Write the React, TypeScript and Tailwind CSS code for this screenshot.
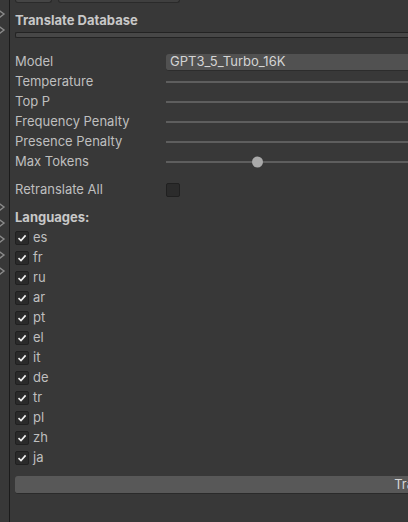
import React from 'react'

const langs = ['es', 'fr', 'ru', 'ar', 'pt', 'el', 'it', 'de', 'tr', 'pl', 'zh', 'ja']

const Chevron = () => (
  <svg width="9" height="12" viewBox="0 0 9 12" className="block">
    <path d="M-2 1.5 L4 6 L-2 10.5" fill="none" stroke="#8a8a8a" strokeWidth="1.4" />
  </svg>
)

const Slider = ({ knob }: { knob?: number }) => (
  <div className="relative flex h-full flex-1 items-center">
    <div className="h-[2px] w-full bg-[#5e5e5e]" />
    {knob !== undefined && (
      <div
        className="absolute top-1/2 h-[11px] w-[11px] -translate-y-1/2 rounded-full bg-[#a9a9a9]"
        style={{ left: knob }}
      />
    )}
  </div>
)

const Row = ({ label, children }: { label: string; children?: React.ReactNode }) => (
  <div className="flex h-[20px] items-center">
    <div className="w-[151px] shrink-0">{label}</div>
    {children}
  </div>
)

const Check = () => (
  <div className="flex h-[14px] w-[14px] items-center justify-center rounded-[2px] border border-[#202020] bg-[#2a2a2a]">
    <svg width="10" height="10" viewBox="0 0 10 10">
      <path d="M1.5 5.2 L4 7.6 L8.6 2.4" fill="none" stroke="#f0f0f0" strokeWidth="1.6" />
    </svg>
  </div>
)

export default function App() {
  return (
    <div
      className="flex h-[522px] w-[408px] overflow-hidden bg-[#383838] text-[13px] text-[#bfbfbf]"
      style={{ fontFamily: 'Inter, "Noto Sans", sans-serif' }}
    >
      <div className="flex w-[9px] shrink-0 flex-col">
        <div className="mt-[8px] flex flex-col gap-[4px]">
          <Chevron />
          <Chevron />
        </div>
        <div className="mt-[165px] flex flex-col gap-[4px]">
          <Chevron />
          <Chevron />
          <Chevron />
          <Chevron />
          <Chevron />
        </div>
      </div>
      <div className="w-px shrink-0 bg-[#1b1b1b]" />
      <div className="flex min-w-[820px] flex-col pl-[5px]">
        <div className="flex h-[3px] gap-[6px]">
          <div className="w-[37px] rounded-b-[3px] border-x border-b border-[#2a2a2a] bg-[#454545]" />
          <div className="w-[122px] rounded-b-[3px] border-x border-b border-[#2a2a2a] bg-[#3f3f3f]" />
        </div>
        <div className="mt-[9px] h-[16px] text-[13px] font-bold leading-[16px] text-[#c8c8c8]">
          Translate Database
        </div>
        <div className="mt-[4px] h-[6px] rounded-l-[2px] border-y border-l border-[#232323] bg-[#474747]" />
        <div className="mt-[14px] flex flex-col">
          <Row label="Model">
            <div className="flex h-[17px] flex-1 items-center rounded-l-[3px] border-b border-[#2c2c2c] bg-[#515151] pl-[4px] text-[#d4d4d4]">
              GPT3_5_Turbo_16K
            </div>
          </Row>
          <Row label="Temperature">
            <Slider />
          </Row>
          <Row label="Top P">
            <Slider />
          </Row>
          <Row label="Frequency Penalty">
            <Slider />
          </Row>
          <Row label="Presence Penalty">
            <Slider />
          </Row>
          <Row label="Max Tokens">
            <Slider knob={86} />
          </Row>
        </div>
        <div className="mt-[8px]">
          <Row label="Retranslate All">
            <div className="h-[14px] w-[14px] rounded-[2px] border border-[#202020] bg-[#2b2b2b]" />
          </Row>
        </div>
        <div className="mt-[8px] flex h-[20px] items-center font-bold text-[#c8c8c8]">Languages:</div>
        <div className="flex flex-col">
          {langs.map((l) => (
            <div key={l} className="flex h-[20px] items-center gap-[4px]">
              <Check />
              <span>{l}</span>
            </div>
          ))}
        </div>
        <div className="mt-[8px] flex h-[18px] items-center justify-center rounded-[3px] border-b border-[#2a2a2a] bg-[#585858] text-[#d6d6d6]">
          Translate
        </div>
      </div>
    </div>
  )
}
